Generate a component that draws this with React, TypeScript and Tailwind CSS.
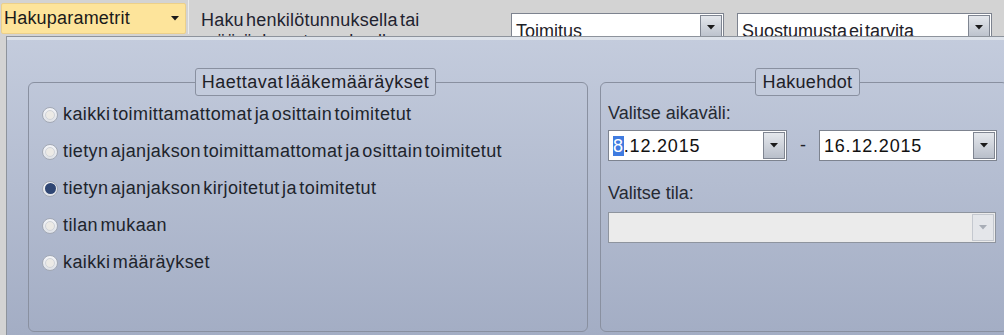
import React from "react";

const font = { fontFamily: '"Liberation Sans", Arial, sans-serif' };

function Arrow({ light }: { light?: boolean }) {
  return (
    <svg width="8" height="5" viewBox="0 0 8 5">
      <path d="M0 0h8L4 4.5z" fill={light ? "#a8adb6" : "#1a1a1a"} />
    </svg>
  );
}

function DropButton({ light }: { light?: boolean }) {
  return (
    <div
      className={
        "flex h-full w-[22px] shrink-0 items-center justify-center border " +
        (light
          ? "border-[#c4c8cf] bg-[#e4e6ea]"
          : "border-[#7f8591] bg-gradient-to-b from-[#e4e7ec] to-[#b9bfca]")
      }
    >
      <Arrow light={light} />
    </div>
  );
}

function Radio({ checked, label }: { checked?: boolean; label: string }) {
  return (
    <div className="flex h-[21px] items-center">
      <div className="ml-[-2px] flex h-[16px] w-[16px] shrink-0 items-center justify-center rounded-full border border-[#a3a9b5] bg-gradient-to-b from-[#f4f5f8] to-[#dfe2e8]">
        {checked ? (
          <div className="h-[11px] w-[11px] rounded-full bg-[#2f4673]" />
        ) : (
          <div className="h-[10px] w-[10px] rounded-full border border-[#d0d3d9] bg-[#eceae6]" />
        )}
      </div>
      <span className="ml-[5px] text-[18px] tracking-[0.4px] text-[#20242c] [word-spacing:-3px]">{label}</span>
    </div>
  );
}

function DateBox({ value, highlight }: { value: string; highlight?: boolean }) {
  return (
    <div className="flex h-[31px] items-center border border-[#7d838f] bg-white p-px">
      <div className="flex-1 pl-[3px] text-[18px] leading-none text-[#111] tracking-[0.8px]">
        {highlight ? (
          <>
            <span className="bg-[#3f7be0] text-white">{value[0]}</span>
            {value.slice(1)}
          </>
        ) : (
          value
        )}
      </div>
      <div className="h-[27px]">
        <DropButton />
      </div>
    </div>
  );
}

export default function App() {
  return (
    <div style={font} className="flex h-[335px] w-[1004px] flex-col overflow-hidden bg-[#d3d3d3] text-[#1e2128]">
      {/* top bar */}
      <div className="flex h-[36px] shrink-0 items-start overflow-hidden">
        <div className="ml-px mt-[3px] flex h-[31px] w-[185px] shrink-0 items-center justify-between rounded-[2px] border border-[#ecd08a] bg-[#fde49b] pl-[2px] pr-[6px]">
          <span className="text-[18px] tracking-[0.2px] text-[#1a1a1a]">Hakuparametrit</span>
          <Arrow />
        </div>
        <div className="ml-[2px] h-[34px] w-px shrink-0 bg-[#ececec]" />
        <div className="ml-[12px] w-[298px] shrink-0 pt-[10px] text-[18px] leading-[21px] tracking-[0.2px] text-[#1f2330] [word-spacing:-3px]">
          Haku henkilötunnuksella tai määräyksen tunnuksella
        </div>
        <div className="ml-[12px] mt-[13px] flex h-[28px] w-[213px] shrink-0 border border-[#7d838f] bg-white p-px">
          <span className="flex-1 pl-[3px] pt-[7px] text-[18px] leading-none">Toimitus</span>
          <DropButton />
        </div>
        <div className="ml-[13px] mt-[13px] flex h-[28px] w-[255px] shrink-0 border border-[#7d838f] bg-white p-px">
          <span className="flex-1 pl-[3px] pt-[7px] text-[18px] leading-none [word-spacing:-3px]">Suostumusta ei tarvita</span>
          <DropButton />
        </div>
      </div>

      {/* main panel */}
      <div className="ml-[6px] flex-1 border-l border-t border-[#8d939c] bg-gradient-to-b from-[#c4ccdd] to-[#a3adc4]">
        <div className="flex h-full gap-[12px] border-t-[3px] border-[#dde2ea] pl-[21px] pt-[28px]">
          <fieldset className="h-[264px] w-[560px] shrink-0 rounded-[6px] border border-[#8990a0] pl-[15px] pt-[8px]">
            <legend className="mx-auto h-[28px] rounded-[3px] border border-[#8990a0] bg-[#c3cbdc] px-[6px] text-[18px] leading-[26px] tracking-[0.5px] [word-spacing:-3px]">
              Haettavat lääkemääräykset
            </legend>
            <div className="flex flex-col gap-[16px]">
              <Radio label="kaikki toimittamattomat ja osittain toimitetut" />
              <Radio label="tietyn ajanjakson toimittamattomat ja osittain toimitetut" />
              <Radio checked label="tietyn ajanjakson kirjoitetut ja toimitetut" />
              <Radio label="tilan mukaan" />
              <Radio label="kaikki määräykset" />
            </div>
          </fieldset>

          <fieldset className="h-[264px] w-[408px] shrink-0 rounded-[6px] border border-[#8990a0] pl-[7px] pt-[6px]">
            <legend className="mx-auto h-[28px] rounded-[3px] border border-[#8990a0] bg-[#c3cbdc] px-[7px] text-[18px] leading-[26px] tracking-[0.3px]">
              Hakuehdot
            </legend>
            <div className="text-[18px] leading-[22px] text-[#262a33]">Valitse aikaväli:</div>
            <div className="mt-[6px] flex items-center">
              <div className="w-[179px]">
                <DateBox value="8.12.2015" highlight />
              </div>
              <div className="w-[32px] text-center text-[18px]">-</div>
              <div className="w-[178px]">
                <DateBox value="16.12.2015" />
              </div>
            </div>
            <div className="mt-[21px] text-[18px] leading-[22px] text-[#262a33]">Valitse tila:</div>
            <div className="mt-[8px] flex h-[31px] w-[388px] border border-[#8e949e] bg-[#ebebeb] p-px">
              <div className="flex-1" />
              <DropButton light />
            </div>
          </fieldset>
        </div>
      </div>
    </div>
  );
}
